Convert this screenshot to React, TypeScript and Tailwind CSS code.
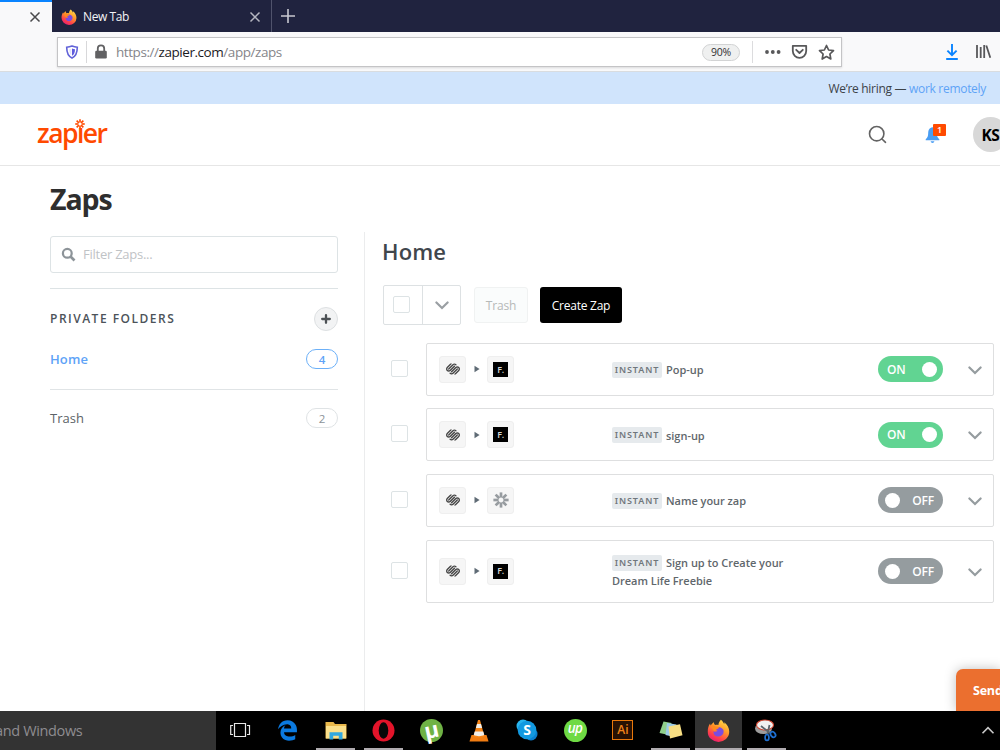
import type { ReactNode } from 'react'
import clsx from 'clsx'
import { FaEdgeLegacy } from 'react-icons/fa'
import { SiSquarespace } from 'react-icons/si'

type AppKind = 'flodesk' | 'zapier'

interface Zap {
  id: number
  name: string
  target: AppKind
  on: boolean
  tall?: boolean
}

const ZAPS: Zap[] = [
  { id: 1, name: 'Pop-up', target: 'flodesk', on: true },
  { id: 2, name: 'sign-up', target: 'flodesk', on: true },
  { id: 3, name: 'Name your zap', target: 'zapier', on: false },
  { id: 4, name: 'Sign up to Create your Dream Life Freebie', target: 'flodesk', on: false, tall: true },
]

const SPOKES = [0, 45, 90, 135, 180, 225, 270, 315]

function Asterisk({ size, width, inner, className }: { size: number; width: number; inner: number; className?: string }) {
  return (
    <svg width={size} height={size} viewBox="-8 -8 16 16" className={className} stroke="currentColor" strokeWidth={width}>
      {SPOKES.map((a) => (
        <line key={a} x1="0" y1={-inner} x2="0" y2="-7.6" transform={`rotate(${a})`} />
      ))}
    </svg>
  )
}

function FirefoxLogo({ size, id }: { size: number; id: string }) {
  return (
    <svg width={size} height={size} viewBox="0 0 24 24">
      <defs>
        <linearGradient id={`${id}-body`} x1="0.8" y1="0" x2="0.25" y2="1">
          <stop offset="0" stopColor="#ffe14a" />
          <stop offset="0.4" stopColor="#ff9a2b" />
          <stop offset="0.75" stopColor="#ff4049" />
          <stop offset="1" stopColor="#e6197a" />
        </linearGradient>
      </defs>
      <path
        d="M14.5.8c2 1.500 2.600 3.100 3.500 4.700.2-.8.1-1.500 0-2.100 3.300 2.400 5.200 6.100 5.200 10A11.200 10.600 0 0 1 .8 13.200c0-3.300.7-6 2.400-8.500.1 1 .4 1.500.8 2 1-1.900 2.100-2.800 3.300-3.400-.1 1.500.4 2.400 1.300 2.900 1.200-.3 2.200-.2 3.300.1.200-2.100 1-4 2.600-5.500z"
        fill={`url(#${id}-body)`}
      />
      <path d="M8 9.700c2-2.400 7.500-1.600 9 1.600 1.300 3-1 7-4.700 7-3.700 0-6-2.700-5.400-5.600 1.400 1 3 .7 4.200-.7-1.600.1-2.900-.8-3.100-2.300z" fill="#7a4ce0" />
      <path d="M4 7.200c1.600-.6 3.300-.4 4.700.6 2 .1 3.700.5 3.900 1.300-.4 1-2.200 1.200-3.100 2.200-.5.800-1 1.500-2.200 1.600" fill="#ff8a1e" />
    </svg>
  )
}

function CloseIcon({ className }: { className?: string }) {
  return (
    <svg width="12" height="12" viewBox="0 0 12 12" className={className} stroke="currentColor" strokeWidth="1.500" fill="none">
      <path d="M1.500 1.500l9 9M10.500 1.500l-9 9" />
    </svg>
  )
}

function Chevron({ className }: { className?: string }) {
  return (
    <svg width="14" height="9" viewBox="0 0 14 9" className={className} stroke="currentColor" strokeWidth="2.200" fill="none" strokeLinecap="round">
      <path d="M1.400 1.500L7 7l5.600-5.500" />
    </svg>
  )
}

function TabStrip() {
  return (
    <div className="flex h-8 bg-[#20233f]">
      <div className="flex w-[52px] items-center border-t-2 border-[#0a84ff] bg-[#f9f9fa] pl-[29px]">
        <CloseIcon className="text-[#4a4a4c]" />
      </div>
      <div className="flex w-[220px] items-center border-r border-[#50536c] pr-[10px] pl-[9px] pt-px">
        <FirefoxLogo size={16} id="tab" />
        <span className="ml-[6px] flex-1 text-[12px] tracking-[-0.4px] text-[#f3f3f6]">New Tab</span>
        <CloseIcon className="text-[#b5b6c0]" />
      </div>
      <svg width="14" height="14" viewBox="0 0 14 14" className="mt-[9px] ml-[9px]" stroke="#c7c8d0" strokeWidth="1.600">
        <path d="M7 0v14M0 7h14" />
      </svg>
    </div>
  )
}

function AddressBar() {
  return (
    <div className="flex h-[40px] items-start border-b border-[#d9dcdf] bg-[#f9f9fa] pt-[5px] pl-[57px]">
      <div className="flex h-[30px] w-[785px] shrink-0 items-center border border-[#c4c4c6] bg-white pr-[6px] pl-[7px] shadow-[0_1px_2px_rgba(0,0,0,0.12)]">
        <svg width="14" height="14" viewBox="0 0 14 14">
          <path d="M7 1c2 .8 3.700 1.100 5.300 1.200 0 5.200-1 8.800-5.300 10.800C2.700 11 1.700 7.400 1.700 2.200 3.300 2.100 5 1.800 7 1z" fill="none" stroke="#6162d8" strokeWidth="1.600" />
          <path d="M7 3.500c1 .4 2 .6 3 .7-.1 3.200-.7 5.300-3 6.600z" fill="#5f5bdd" />
          <path d="M6.300 3.700c-.8.300-1.400.4-2.100.5.100 2.700.6 4.700 2.100 6z" fill="#e4e4fb" />
        </svg>
        <div className="ml-[7px] h-[22px] w-px bg-[#d8d8da]" />
        <svg width="14" height="16" viewBox="0 0 14 16" className="ml-[7px]">
          <path d="M3.800 8V4.500a3.200 3.200 0 0 1 6.400 0V8" fill="none" stroke="#616163" strokeWidth="1.800" />
          <rect x="1.200" y="6.800" width="11.600" height="7.700" rx="1.200" fill="#616163" />
        </svg>
        <span className="ml-2 flex-1 pt-px text-[13.500px] tracking-[-0.440px] text-[#85858a]">
          https://<span className="text-[#1b1b1f]">zapier.com</span>/app/zaps
        </span>
        <span className="flex h-[17px] w-[38px] items-center justify-center rounded-full border border-[#d2d3d4] bg-[#eff0f0] pt-px text-[10.500px] tracking-[-0.2px] text-[#2f2f31]">
          90%
        </span>
        <div className="ml-3 h-[22px] w-px bg-[#dcdcde]" />
        <svg width="18" height="6" viewBox="0 0 18 6" className="ml-[11px]" fill="#58585a">
          <circle cx="3" cy="3" r="1.900" />
          <circle cx="8.800" cy="3" r="1.900" />
          <circle cx="14.600" cy="3" r="1.900" />
        </svg>
        <svg width="17" height="16" viewBox="0 0 17 16" className="ml-[9px]" fill="none" stroke="#58585a" strokeWidth="1.800" strokeLinejoin="round" strokeLinecap="round">
          <path d="M1.800 1.800h13.400v5.300a6.700 6.700 0 0 1-13.400 0z" />
          <path d="M5.200 5.800l3.300 3.200 3.300-3.200" />
        </svg>
        <svg width="17" height="17" viewBox="0 0 17 17" className="ml-[10px]" fill="none" stroke="#58585a" strokeWidth="1.700" strokeLinejoin="round">
          <path d="M8.500 1.500l2.100 4.500 4.900.6-3.600 3.400.9 5-4.300-2.400L4.200 15l.9-5L1.500 6.600l4.900-.6z" />
        </svg>
      </div>
      <svg width="14" height="18" viewBox="0 0 14 18" className="mt-[6px] ml-[103px] shrink-0" fill="none" stroke="#0a84ff" strokeWidth="1.900">
        <path d="M7 1v11M2.400 7.600L7 12.200l4.600-4.600M1.200 16h11.600" />
      </svg>
      <svg width="17" height="16" viewBox="0 0 17 16" className="mt-[7px] ml-[16px] shrink-0" fill="none" stroke="#58585a" strokeWidth="1.800">
        <path d="M2 1v13M5.700 3v11M9.200 1v13M11.300 1.500l4 12.300" />
      </svg>
    </div>
  )
}

function Banner() {
  return (
    <div className="flex h-[32px] items-center justify-end bg-[#d0e4fc] pt-[2px] pr-[14px] text-[12px] tracking-[-0.3px] text-[#3c4248]">
      <span>
        We’re hiring — <span className="text-[#5ea3f7]">work remotely</span>
      </span>
    </div>
  )
}

function SiteHeader() {
  return (
    <header className="flex h-[62px] items-center border-b border-[#e6e6e6] pl-[37px]">
      <div className="relative -mt-[3px] text-[26.500px] leading-none font-semibold tracking-[-1.550px] text-[#ff4a00]">
        zapıer
        <Asterisk size={10} width={2.6} inner={2.5} className="absolute -top-[1px] left-[38px]" />
      </div>
      <div className="ml-auto flex shrink-0 items-center">
        <svg width="19" height="19" viewBox="0 0 19 19" fill="none" stroke="#636363" strokeWidth="1.600" strokeLinecap="round">
          <circle cx="8.700" cy="8.700" r="7.200" />
          <path d="M14 14l3.500 3.300" />
        </svg>
        <div className="relative ml-[38px] h-[19px] w-[23px]">
          <svg width="16" height="18" viewBox="0 0 16 18" className="mt-[1px]" fill="#499df3">
            <path d="M7.500 1.200C4.300 1.700 3.300 4 3.200 7c-.1 3-.6 4.800-2.500 6.300v1h13.600v-1c-1.900-1.500-2.400-3.300-2.500-6.300-.1-3-1.100-5.300-4.300-5.800z" />
            <path d="M5.700 15.300h3.600c-.2 2.200-3.400 2.200-3.600 0z" />
          </svg>
          <span className="absolute -top-[1px] left-[8px] flex h-3 w-[13px] items-center justify-center rounded-[1px] bg-[#ff4a00] text-[9px] font-semibold text-white">
            1
          </span>
        </div>
        <div className="-mr-2 ml-[25px] flex size-[35px] items-center justify-center rounded-full bg-[#d8d8d8] pt-[2px] text-[15.500px] font-bold tracking-[-0.300px] text-black">
          KS
        </div>
      </div>
    </header>
  )
}

function CountPill({ count, active }: { count: number; active?: boolean }) {
  return (
    <span
      className={clsx(
        'flex h-5 w-8 items-center justify-center rounded-full border pt-px text-[11.500px]',
        active ? 'border-[#6cb0f8] font-semibold text-[#5ea3f7]' : 'border-[#dfe3e5] text-[#8c9398]',
      )}
    >
      {count}
    </span>
  )
}

function Sidebar() {
  return (
    <aside className="flex w-[288px] shrink-0 flex-col pt-[4px]">
      <div className="flex h-[37px] items-center rounded-[3px] border border-[#dde3e5] pl-[10px]">
        <svg width="15" height="15" viewBox="0 0 15 15" fill="none" stroke="#8d9499" strokeWidth="2.200" className="-mt-px">
          <circle cx="6.300" cy="6.300" r="4.400" />
          <path d="M9.500 9.500l4 4" strokeWidth="2.600" />
        </svg>
        <input
          placeholder="Filter Zaps..."
          className="ml-[7px] w-40 text-[13px] tracking-[-0.250px] placeholder:text-[#bfc3c6] focus:outline-none"
        />
      </div>
      <div className="mt-[15px] flex h-[60px] items-center justify-between border-t border-[#dde3e5]">
        <h3 className="pt-px text-[12px] font-semibold tracking-[1.500px] text-[#4c5359]">PRIVATE FOLDERS</h3>
        <button className="flex size-6 items-center justify-center rounded-full border border-[#dde0e2] bg-[#f2f3f4]">
          <svg width="10" height="10" viewBox="0 0 10 10" stroke="#4c5155" strokeWidth="2.300" strokeLinecap="round">
            <path d="M5 1.200v7.600M1.200 5h7.600" />
          </svg>
        </button>
      </div>
      <div className="flex h-[42px] items-start justify-between border-b border-[#e0e4e6] pt-[1px]">
        <a className="text-[13px] leading-[21px] font-semibold tracking-[0.100px] text-[#5ea3f7]">Home</a>
        <CountPill count={4} active />
      </div>
      <div className="mt-[18px] flex items-center justify-between">
        <a className="text-[13px] leading-5 text-[#5c6368]">Trash</a>
        <CountPill count={2} />
      </div>
    </aside>
  )
}

function Checkbox() {
  return <span className="block size-[17px] shrink-0 rounded-[2px] border border-[#dde3e5] bg-white" />
}

function AppTile({ children }: { children: ReactNode }) {
  return (
    <span className="flex size-[27px] items-center justify-center rounded-[3px] border border-[#efefef] bg-[#f6f6f6]">
      {children}
    </span>
  )
}

function Toggle({ on }: { on: boolean }) {
  return (
    <button
      className={clsx(
        'flex h-[26px] w-[65px] shrink-0 items-center justify-between rounded-full text-[12px] font-semibold tracking-[-0.2px] text-white',
        on ? 'flex-row bg-[#61d492] pr-[6px] pl-[9px]' : 'flex-row-reverse bg-[#959c9f] pr-[9px] pl-[7px]',
      )}
    >
      <span className="pt-px">{on ? 'ON' : 'OFF'}</span>
      <span className="size-[15px] rounded-full bg-white" />
    </button>
  )
}

function ZapRow({ zap }: { zap: Zap }) {
  return (
    <li className={clsx('flex items-center', zap.tall ? 'h-[63px]' : 'h-[53px]')}>
      <div className="mr-[18px] ml-2 pb-[2px]">
        <Checkbox />
      </div>
      <div className="flex h-full w-[568px] shrink-0 items-center rounded-[2px] border border-[#dedfe0] pl-3">
        <div className="flex w-[173px] items-center">
          <AppTile>
            <SiSquarespace size={14} className="text-[#444]" />
          </AppTile>
          <svg width="6" height="8" viewBox="0 0 6 8" className="mr-[7px] ml-[8px]">
            <path d="M.5.800v6.400L5.600 4z" fill="#5f6b75" />
          </svg>
          <AppTile>
            {zap.target === 'flodesk' ? (
              <span className="flex size-[15px] items-center justify-center bg-black text-[9px] font-semibold tracking-[-0.5px] text-[#d8d8d8]">
                F.
              </span>
            ) : (
              <Asterisk size={16} width={2.7} inner={2.400} className="text-[#979ca0]" />
            )}
          </AppTile>
        </div>
        <p className="w-[200px] pt-[2px] text-[11px] leading-[18px] font-semibold tracking-[-0.030px] text-[#5f676c]">
          <span className="relative -top-[1.500px] mr-[4px] inline-block h-4 w-[50px] rounded-[2px] bg-[#e6eaed] text-center font-['Noto_Sans',sans-serif] text-[9px] leading-4 font-semibold tracking-[0.900px] text-[#70777c]">
            INSTANT
          </span>
          {zap.name}
        </p>
        <div className="ml-[66px]">
          <Toggle on={zap.on} />
        </div>
        <Chevron className="mt-[2px] ml-[25px] text-[#959c9f]" />
      </div>
    </li>
  )
}

function ZapList() {
  return (
    <section className="ml-[26px] flex-1 border-l border-[#ebeced] pl-[18px]">
      <h2 className="-ml-px pt-[4px] text-[22px] leading-[30px] font-semibold tracking-[0.100px] text-[#40464c]">Home</h2>
      <div className="mt-[19px] flex items-center">
        <div className="flex h-10 w-[78px] rounded-[2px] border border-[#dde1e3]">
          <div className="flex w-[39px] items-center justify-center border-r border-[#dde1e3] pr-1 pb-px">
            <Checkbox />
          </div>
          <button className="flex flex-1 items-center justify-center">
            <Chevron className="text-[#9a9fa3]" />
          </button>
        </div>
        <button className="ml-[13px] h-9 w-[54px] rounded-[3px] border border-[#f0f2f2] bg-[#fafcfc] pt-px text-[12px] tracking-[-0.2px] text-[#b6b9b8]">
          Trash
        </button>
        <button className="ml-3 h-9 w-[82px] rounded-[3px] bg-black pt-px text-[12px] tracking-[-0.250px] text-white">
          Create Zap
        </button>
      </div>
      <ul className="mt-[17.800px] flex flex-col gap-[12.600px]">
        {ZAPS.map((zap) => (
          <ZapRow key={zap.id} zap={zap} />
        ))}
      </ul>
    </section>
  )
}

const TASKS: { id: string; open?: boolean; active?: boolean; icon: ReactNode }[] = [
  {
    id: 'task-view',
    icon: (
      <svg width="21" height="16" viewBox="0 0 21 16" fill="none" stroke="#e8e8e8" strokeWidth="1.200">
        <path d="M4.500 1.500h11v13h-11zM3 3.500H.700v9H3M17 3.500h2.500v9H17" />
      </svg>
    ),
  },
  { id: 'edge', icon: <FaEdgeLegacy size={21} color="#0b7ae0" /> },
  {
    id: 'explorer',
    open: true,
    icon: (
      <svg width="22" height="19" viewBox="0 0 22 19">
        <path d="M.5 1h8l1.500 2h11.500v14.500H.5z" fill="#e9b84b" />
        <path d="M1 5h20v12.500H1z" fill="#fbe08b" />
        <path d="M4.500 18.500v-7.200h13v7.200h-3.700v-3.700H8.200v3.700z" fill="#31a8e0" />
      </svg>
    ),
  },
  {
    id: 'opera',
    open: true,
    icon: (
      <svg width="23" height="23" viewBox="0 0 23 23">
        <circle cx="11.500" cy="11.500" r="11" fill="#e3142a" />
        <ellipse cx="11.500" cy="11.500" rx="4.800" ry="8.200" fill="#080808" />
      </svg>
    ),
  },
  {
    id: 'utorrent',
    icon: (
      <span className="flex size-[23px] items-center justify-center rounded-full bg-[#6fb245] pb-[3px]">
        <span className="-rotate-12 text-[22px] leading-none font-bold text-white">µ</span>
      </span>
    ),
  },
  {
    id: 'vlc',
    icon: (
      <svg width="20" height="23" viewBox="0 0 20 23">
        <path d="M2.500 16h15l2 6.500H.500z" fill="#f07c12" />
        <path d="M9 1h2l4.500 16.500c-3 1.600-8 1.600-11 0z" fill="#f58518" />
        <path d="M8 5h4l1.100 4H6.900zM5.700 12.500h8.600l1 3.500c-3 1.500-7.600 1.500-10.600 0z" fill="#f0eeea" />
      </svg>
    ),
  },
  {
    id: 'skype',
    icon: (
      <span className="relative flex size-[22px] items-center justify-center">
        <svg width="22" height="22" viewBox="0 0 22 22" className="absolute inset-0">
          <circle cx="7" cy="7" r="6.500" fill="#29b5ee" />
          <circle cx="15" cy="15" r="6.500" fill="#0a7fd0" />
          <circle cx="11" cy="11" r="9.300" fill="#1299e0" />
        </svg>
        <span className="relative text-[14px] leading-none font-bold text-white">S</span>
      </span>
    ),
  },
  {
    id: 'upwork',
    icon: (
      <span className="flex size-[23px] items-center justify-center rounded-full bg-[#6fda44] pb-[3px] text-[13.500px] leading-none font-semibold tracking-[-0.8px] text-white italic">
        up
      </span>
    ),
  },
  {
    id: 'illustrator',
    icon: (
      <span className="flex h-5 w-[21px] items-center justify-center border-[1.500px] border-[#e8780c] bg-[#271103] text-[12px] leading-none font-semibold text-[#f08319]">
        Ai
      </span>
    ),
  },
  {
    id: 'notes',
    open: true,
    icon: (
      <svg width="24" height="20" viewBox="0 0 24 20">
        <path d="M4.500 1.500l8 1.500-2.500 12-9.500-2z" fill="#8fcf8b" />
        <path d="M8 3l9.500 1.500-2 12.500-9-2z" fill="#9ccbe8" />
        <path d="M9.500 6.500l11.500-2.300 2.500 11-12.500 3.300z" fill="#f8df83" />
      </svg>
    ),
  },
  { id: 'firefox', open: true, active: true, icon: <FirefoxLogo size={23} id="task" /> },
  {
    id: 'snip',
    open: true,
    icon: (
      <svg width="24" height="23" viewBox="0 0 24 23" fill="none">
        <ellipse cx="9.500" cy="9.500" rx="8.500" ry="5.500" fill="#9c9c9c" />
        <ellipse cx="11" cy="6" rx="8.500" ry="5" fill="#f1f1f1" stroke="#d0432e" strokeWidth="1.100" />
        <path d="M7 7l9 7M15.500 6L13.500 15" stroke="#5c646b" strokeWidth="1.800" />
        <ellipse cx="13" cy="18.500" rx="1.900" ry="3" stroke="#1e6fd0" strokeWidth="1.700" />
        <ellipse cx="19" cy="15.500" rx="2.200" ry="3" stroke="#1e6fd0" strokeWidth="1.700" transform="rotate(-38 19 15.500)" />
      </svg>
    ),
  },
]

function Taskbar() {
  return (
    <footer className="flex h-[39px] bg-black">
      <div className="flex w-[216.200px] shrink-0 items-center bg-[#333] pt-px text-[14.500px] tracking-[-0.350px] whitespace-nowrap text-[#8e8c90]">
        <span className="-ml-[5px]">and Windows</span>
      </div>
      {TASKS.map((task) => (
        <div
          key={task.id}
          className={clsx('flex w-[47.850px] shrink-0 flex-col items-center', task.active && 'bg-[#333]')}
        >
          <div className="flex h-[37px] items-center pt-px">{task.icon}</div>
          {task.open && <div className={clsx('h-[2px] bg-[#b0acb0]', task.active ? 'w-full' : 'w-[39px]')} />}
        </div>
      ))}
      <svg width="14" height="9" viewBox="0 0 14 9" className="mt-[15px] mr-[5px] ml-auto" fill="none" stroke="#c8c8c8" strokeWidth="1.600">
        <path d="M1.500 7.200L7 1.700l5.500 5.500" />
      </svg>
    </footer>
  )
}

export default function App() {
  return (
    <div className="relative flex h-[750px] w-[1000px] flex-col overflow-hidden bg-white font-['Open_Sans','Noto_Sans',sans-serif]">
      <TabStrip />
      <AddressBar />
      <Banner />
      <SiteHeader />
      <main className="flex flex-1 flex-col pl-[50px]">
        <h1 className="mt-[13px] h-[53px] text-[28.500px] leading-[40px] font-bold tracking-[-1.100px] text-[#2e2e2e]">Zaps</h1>
        <div className="flex flex-1">
          <Sidebar />
          <ZapList />
        </div>
      </main>
      <Taskbar />
      <div className="absolute right-0 bottom-[39px] flex h-[42px] w-[44px] items-center overflow-hidden rounded-tl-[7px] bg-[#eb6f2f] pt-[2px] pl-[17px] text-[12.500px] font-bold tracking-[-0.2px] whitespace-nowrap text-white shadow-[0_0_12px_rgba(0,0,0,0.25)]">
        Send
      </div>
    </div>
  )
}
